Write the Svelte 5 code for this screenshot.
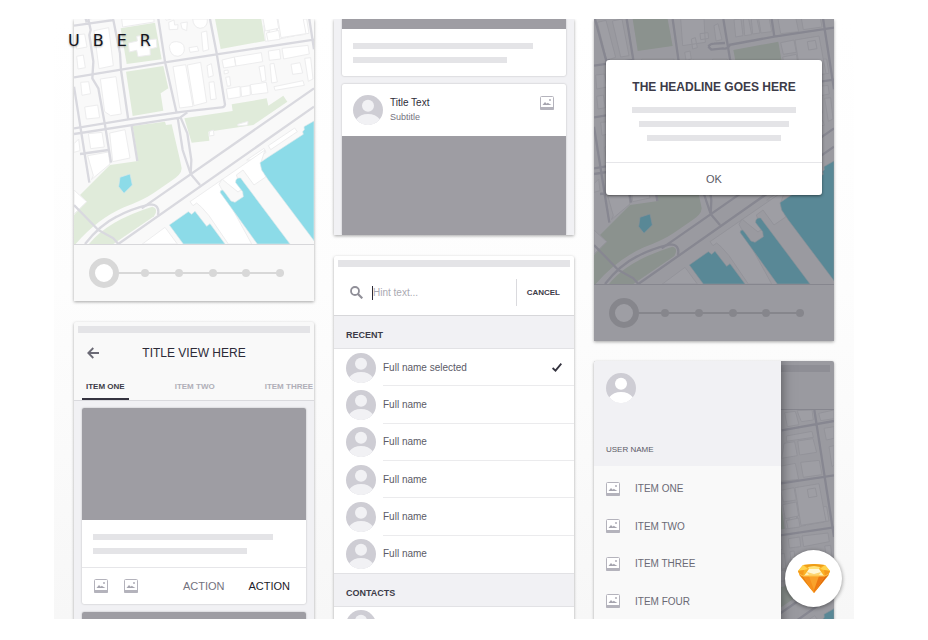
<script lang="ts">
interface Contact {
  id: number
  name: string
}

const tabs = ['ITEM ONE', 'ITEM TWO', 'ITEM THREE']
const menuItems = ['ITEM ONE', 'ITEM TWO', 'ITEM THREE', 'ITEM FOUR']
const recent: Contact[] = [
  { id: 1, name: 'Full name selected' },
  { id: 2, name: 'Full name' },
  { id: 3, name: 'Full name' },
  { id: 4, name: 'Full name' },
  { id: 5, name: 'Full name' },
  { id: 6, name: 'Full name' },
]

let activeTab = $state('ITEM ONE')
let selectedContact = $state(1)
let query = $state('')
</script>

{#snippet cityMap(align: string)}
  <svg class="map" viewBox="0 -290 720 965" preserveAspectRatio={align} aria-hidden="true">
    <rect y="-290" width="720" height="965" fill="#f9f9f9" />
    <g fill="#e0ebda">
      <path d="M116-120H221L236-39 131-24ZM140 28 243 11 263 121 158 135ZM156 158 268 141 283 208 260 223 268 275 176 291ZM418-27 553-52 573 66 440 90Z" />
      <path d="M331 298 476 276 473 256 578 238 583 260 628 230 640 248 538 318 403 338 406 365 353 371Z" />
      <path d="M176 321 273 308 276 318 293 316 318 423 323 448Q323 468 288 488L238 523Q205 545 150 565 70 600 5 675H0V588L38 548 18 528 108 438 192 426Z" />
      <path d="M45 675Q100 605 235 563 255 568 240 592L118 675Z" />
    </g>
    <g fill="#fff" stroke="#ededee" stroke-width="3">
      <path d="M143 0H240V9L146 24ZM163 72 190 66 188 52 208 48V64L247 60 249 85 228 90 229 108 192 113 188 94 166 99Z" />
      <path d="M60 35 104 26 118 140 75 149ZM8 112 28 108 34 146 12 150ZM20 190 44 188 50 224 24 229ZM32 264 71 258 77 296 37 300ZM79 180 126 173 142 285 110 290 92 278Z" />
      <path d="M0 374 14 360 18 395 0 400ZM43 344 84 340 91 384 50 389ZM107 342 153 332 168 417 116 428ZM41 410 103 399 108 435 52 482 58 470ZM0 513 38 548 0 585Z" />
      <path d="M297 143 335 137 357 262 317 267ZM340 138 380 130 398 250 360 260ZM405 190 420 188 427 240 410 242ZM399 140 412 134 418 170 403 175ZM382 40 398 36 404 92 387 97ZM345 86 370 82 374 96 348 100Z" />
      <path d="M286 82Q290 67 308 68 330 70 331 88 332 108 312 112 288 112 286 82ZM284 10 300 3 302 18 312 17 311 31 286 32ZM320 12 340 9 338 35 324 29ZM356 0H400Q402 27 378 28 358 25 356 0Z" />
      <path d="M570 20 580 16 585 65 574 67ZM584 15 604 12 612 60 590 64ZM607 10 630 6 636 56 614 60ZM633 3 655 0 662 51 639 55ZM658 0H676L688 47 665 50ZM680 0H698L705 43 690 45Z" />
      <path d="M444 123 481 114 485 141 449 147ZM481 114 562 101 566 128 486 141ZM583 96 617 91 620 120 586 124ZM624 88 702 79 706 105 629 120ZM692 118 710 116 717 180 703 187ZM555 143 571 140 576 185 563 188ZM588 135 600 133 610 189 593 192ZM651 136 678 131 686 162 656 166Z" />
      <path d="M450 155 462 153 463 162 451 165ZM455 175 467 173 470 200 460 202ZM457 210 498 202 499 234 462 240ZM500 204 528 200 529 228 503 233ZM529 197 577 190 582 221 533 227ZM600 203 687 185 691 199 603 214ZM407 337 418 333 420 349 405 351ZM491 316 522 307 521 318 492 321Z" />
      <path d="M583 380 662 327 670 338 590 392ZM518 423 570 388 576 400 545 423ZM205 675 273 625 310 675Z" />
      <path d="M348 548 573 393 562 427 575 474 540 498 507 453 487 468 504 511 492 519 461 494 444 480 435 496 533 675H463L405 590 383 565 368 552 357 560Z" />
      <!-- blocks north of the park -->
      <path d="M10-110 36-116 65-5 38 4ZM55-114 84-120 105-10 80-6ZM260-120 330-120 334-50 266-40ZM5 48 32 45 39 84 8 90ZM272-20 288-24 292 0 276 4ZM292-60 304-64 310-34 296-30ZM318-76 342-79 344-62 320-58ZM360-100 372-106 384-58 366-54ZM420-118 441-120 447-70 425-66ZM448-120 464-120 473-73 452-70ZM472-120 489-120 498-78 476-75ZM494-120 526-120 533-82 501-78Z" />
      <path d="M552-120 604-130 614-82 560-76ZM620-133 676-139 684-96 628-88ZM560-49 600-57 607-20 568-14ZM566-6 607-14 614 28 574 36ZM603-57 675-69 696 44 621 56ZM640-52 664-56 669-31 644-27ZM577 42 614 34 618 61 582 66ZM563-145 610-153 602-195 570-190ZM617-155 668-163 657-204 611-197Z" />
      <path d="M572-282 604-286 615-246 580-240ZM609-288 654-290 658-260 622-255ZM577-212 654-226 658-208 577-196ZM674-280 720-290V-264L680-258ZM690-235 720-240V-205L697-200ZM705-180 720-183V-125L714-120Z" />
    </g>
    <g fill="#8cdbe8" stroke="#d8e7ea" stroke-width="2">
      <path d="M138 475 168 465 175 498 150 523 134 503Z" />
      <path d="M286 618 343 578 353 586 363 577 398 622 408 614 453 675H328Z" />
      <path d="M439 521Q437 513 446 513L453 521 471 546 483 550 508 533 506 518 485 491Q484 475 500 477L508 488 648 675H550Z" />
      <path d="M558 431 580 416 688 346 686 338 691 332 690 323 720 306V665L583 483 563 453Z" />
    </g>
    <g fill="none" stroke="#d9d9df" stroke-width="7" stroke-linejoin="round">
      <path d="M0 20 118 3M3-120 38 10M98-120 118 3 138 103 141 153 163 303M43 0 50 33 46 48 58 128 55 178 73 208 93 318 111 431" />
      <path d="M236-120 253 0 273 128 308 283M388-120 408 0 428 103 453 257Q452 265 443 265L328 278 163 301 0 328M0 175 273 130 428 106 720 62" />
      <path d="M0 345 318 296 340 280M311 296 326 393 350 465 378 498M320 296 340 343 352 423 350 465M720 208 203 568M720 263 133 675" />
      <path d="M0 203 35 423 46 491M18 405 103 393M173 321 190 426M0 558 73 633 118 658 133 675M33 675Q78 618 128 593 170 570 228 556 258 556 252 588" />
      <path d="M343-37Q348-46 360-46L393-48M408-42Q400-28 387-32L352-28 343-37M404-42 541-67 720-94M533-120 541-67M661-290 720 91M563-229 720-257" />
    </g>
  </svg>
{/snippet}

{#snippet avatar(shape: string)}
  <svg class="avatar" viewBox="0 0 30 30" aria-hidden="true">
    <circle cx="15" cy="15" r="15" fill="#cecdd4" />
    <circle cx="15" cy="10.8" r="6" fill={shape} />
    <path d="M3.2 24.3Q7.5 19 15 19t11.8 5.3A15 15 0 0 1 3.2 24.3Z" fill={shape} />
  </svg>
{/snippet}

{#snippet picture()}
  <svg class="picture" viewBox="0 0 14 14" aria-hidden="true">
    <rect x=".5" y=".5" width="13" height="13" rx="1" fill="#fff" stroke="#b4b3bc" />
    <path d="M0 11H14V13a1 1 0 0 1-1 1H1a1 1 0 0 1-1-1Z" fill="#b4b3bc" />
    <path d="M2.5 9 5 6 6.7 7.8 7.8 6.8 9.2 7.8 11.5 9Z" fill="#a5a4ae" />
    <circle cx="10" cy="4" r="1.1" fill="#b4b3bc" />
  </svg>
{/snippet}

{#snippet stepper(label: string)}
  <div class="stepper">
    <div class="steps">
      {#each [1, 2, 3, 4, 5] as step (step)}
        <span class="dot"></span>
      {/each}
    </div>
    <input type="range" min="0" max="5" value="0" aria-label={label} />
  </div>
{/snippet}

{#snippet textLines()}
  <div class="text-lines">
    <span class="line"></span>
    <span class="line short"></span>
  </div>
{/snippet}

<main class="board">
  <h1 class="brand"><span>U</span><span>B</span><span>E</span><span>R</span></h1>

  <div class="column">
    <section class="screen cut">
      <div class="map-view">{@render cityMap('xMidYMax slice')}</div>
      {@render stepper('Vehicle type')}
    </section>

    <section class="screen">
      <div class="status-bar"></div>
      <header class="title-bar">
        <button class="back" aria-label="Back">
          <svg viewBox="0 0 12 12" fill="none" stroke="#6b6a75" stroke-width="1.8">
            <path d="M12 6H1.5M6.3 1 1.3 6l5 5" />
          </svg>
        </button>
        <h2>TITLE VIEW HERE</h2>
      </header>
      <nav class="tabs">
        {#each tabs as tab (tab)}
          <button class:active={activeTab === tab} onclick={() => (activeTab = tab)}>{tab}</button>
        {/each}
      </nav>
      <div class="feed">
        <article class="card">
          <div class="media tall"></div>
          {@render textLines()}
          <footer class="actions">
            <button aria-label="Image">{@render picture()}</button>
            <button aria-label="Gallery">{@render picture()}</button>
            <button class="action push">ACTION</button>
            <button class="action primary">ACTION</button>
          </footer>
        </article>
        <article class="card">
          <div class="media tall"></div>
        </article>
      </div>
    </section>
  </div>

  <div class="column">
    <section class="screen cut feed cropped">
      <article class="card">
        <div class="media strip"></div>
        {@render textLines()}
      </article>
      <article class="card">
        <header class="card-header">
          {@render avatar('#f1f1f4')}
          <div>
            <h3>Title Text</h3>
            <p>Subtitle</p>
          </div>
          <button aria-label="Image">{@render picture()}</button>
        </header>
        <div class="media"></div>
      </article>
    </section>

    <section class="screen search-screen">
      <div class="status-bar"></div>
      <div class="search">
        <svg class="glass" viewBox="0 0 13 13" fill="none" stroke="#908f98" aria-hidden="true">
          <circle cx="5" cy="5" r="4" stroke-width="1.8" />
          <path d="M8 8l4.3 4.3" stroke-width="2.2" />
        </svg>
        <input type="text" placeholder="Hint text..." aria-label="Search" bind:value={query} />
        <button class="cancel" onclick={() => (query = '')}>CANCEL</button>
      </div>
      <h3 class="group">RECENT</h3>
      <ul class="contacts">
        {#each recent as contact (contact.id)}
          <li>
            <button onclick={() => (selectedContact = contact.id)}>
              {@render avatar('#f1f1f4')}
              <span class="name">
                {contact.name}
                {#if selectedContact === contact.id}
                  <svg class="check" viewBox="0 0 10 9" fill="none" stroke="#34333f" stroke-width="1.8" aria-hidden="true">
                    <path d="M.6 5 3.5 7.6 9.3.7" />
                  </svg>
                {/if}
              </span>
            </button>
          </li>
        {/each}
      </ul>
      <h3 class="group ruled">CONTACTS</h3>
      <div class="next-contact">{@render avatar('#f1f1f4')}</div>
    </section>
  </div>

  <div class="column tight">
    <section class="screen cut">
      <div class="map-view large">{@render cityMap('xMidYMax slice')}</div>
      {@render stepper('Vehicle type, behind dialog')}
      <div class="scrim"></div>
      <div class="dialog" role="dialog" aria-labelledby="headline">
        <div class="dialog-body">
          <h2 id="headline">THE HEADLINE GOES HERE</h2>
          <span class="line"></span>
          <span class="line medium"></span>
          <span class="line short"></span>
        </div>
        <button>OK</button>
      </div>
    </section>

    <section class="screen">
      <div class="status-bar"></div>
      <div class="app-bar"></div>
      <div class="map-view">{@render cityMap('xMidYMin slice')}</div>
      <div class="scrim"></div>
      <aside class="drawer">
        <header>
          {@render avatar('#fff')}
          <p>USER NAME</p>
        </header>
        <nav>
          {#each menuItems as item (item)}
            <a href="#menu">{@render picture()}{item}</a>
          {/each}
        </nav>
      </aside>
    </section>
  </div>

  <button class="badge" aria-label="Download Sketch file">
    <svg viewBox="0 0 32 30" aria-hidden="true">
      <path d="M5 1 16 0 27 1 32 7 30 12 16 29 2 12 0 7Z" fill="#fbb024" />
      <path d="M5 1 16 0 27 1 22 3 16 2 10 3Z" fill="#ee9c16" />
      <path d="M5 1 10 5 6 6 0 7ZM27 1 22 5 26 6 32 7Z" fill="#ffd24d" />
      <path d="M0 7 6 6 5 12H2ZM32 7 26 6 27 12H30Z" fill="#f59a1c" />
      <path d="M10 3 16 2 22 3 21 5H11Z" fill="#ffe27a" />
      <path d="M11 5H21L26 12H6Z" fill="#fdd673" />
      <path d="M11 5H21L23 8 16 10 9 8Z" fill="#fff7d6" />
      <path d="M9 8 11 11 6 12ZM23 8 21 11 26 12Z" fill="#fff0b4" />
      <path d="M1 10 5 12 16 29Z" fill="#ea7d12" />
      <path d="M31 10 27 12 16 29Z" fill="#dd6710" />
      <path d="M5 12H16V29Z" fill="#f6901d" />
      <path d="M27 12H16V29Z" fill="#ee7a13" />
      <path d="M11 12H21L16 26Z" fill="#f9a22c" />
      <path d="M1 10 5 12H27L31 10" fill="none" stroke="#ffc34a" />
    </svg>
  </button>
</main>

<style>
  :global(body) {
    margin: 0;
    background: #fff;
    font-family: "Liberation Sans", Arial, sans-serif;
    font-size: 10px;
    color: #5b5a66;
  }

  h1, h2, h3, p, ul {
    margin: 0;
    padding: 0;
  }

  button {
    padding: 0;
    border: 0;
    background: none;
    color: inherit;
    font: inherit;
    cursor: pointer;
  }

  svg {
    display: block;
    flex: none;
  }

  .board {
    position: relative;
    display: grid;
    grid-template-columns: repeat(3, minmax(0, 1fr));
    gap: 20px;
    box-sizing: border-box;
    height: calc(100vh - 40px);
    margin: 19px 74px 21px 54px;
    padding: 0 20px;
    overflow: hidden;
    background: linear-gradient(#fff, #fdfdfd 45%, #f7f7f7);
  }

  .brand {
    position: absolute;
    z-index: 1;
    top: 12px;
    left: 14px;
    display: flex;
    justify-content: space-between;
    width: 83px;
    color: #15151c;
    font-family: "DejaVu Sans", sans-serif;
    font-size: 16px;
    font-weight: 400;
    line-height: 20px;
    text-shadow: 0 1px 2px rgba(0, 0, 0, 0.3);
  }

  .column {
    display: flex;
    flex-direction: column;
    gap: 21px;
    min-width: 0;
  }

  .tight {
    gap: 20px;
  }

  .screen {
    position: relative;
    flex: none;
    overflow: hidden;
    border-radius: 2px;
    background: #f9f9f9;
    box-shadow: 0 1px 3px rgba(0, 0, 0, 0.35);
  }

  .cut {
    border-radius: 0;
  }

  .map-view {
    height: 225px;
  }

  .map-view.large {
    height: 265px;
  }

  .map {
    width: 100%;
    height: 100%;
  }

  .stepper {
    position: relative;
    display: flex;
    align-items: center;
    height: 56px;
    padding: 0 30px 0 41px;
    border-top: 1px solid #d7d7da;
  }

  .steps {
    display: flex;
    flex: 1;
    justify-content: space-between;
    padding-left: 26px;
    background: linear-gradient(#d8d8d8, #d8d8d8) center / 100% 2px no-repeat;
  }

  .dot {
    width: 8px;
    height: 8px;
    border-radius: 50%;
    background: #d8d8d8;
  }

  .stepper input {
    position: absolute;
    left: 15px;
    width: calc(100% - 34px);
    height: 30px;
    margin: 0;
    appearance: none;
    background: none;
  }

  .stepper input::-webkit-slider-thumb {
    appearance: none;
    box-sizing: border-box;
    width: 30px;
    height: 30px;
    border: 6px solid #d8d8d8;
    border-radius: 50%;
    background: #fff;
  }

  .status-bar {
    height: 7px;
    margin: 4px 4px 0;
    background: #e4e4e7;
  }

  .title-bar {
    display: grid;
    grid-template-columns: 12px 1fr 12px;
    align-items: center;
    height: 40px;
    padding: 0 13px;
    text-align: center;
  }

  .title-bar h2 {
    color: #2c2b38;
    font-size: 12px;
    font-weight: 400;
  }

  .back svg {
    width: 12px;
    height: 12px;
  }

  .tabs {
    display: flex;
    gap: 42px;
    height: 27px;
    padding-left: 8px;
    border-bottom: 1px solid #dadade;
    white-space: nowrap;
  }

  .tabs button {
    padding: 2px 4px 0;
    border-bottom: 2px solid transparent;
    color: #b0afb8;
    font-size: 8px;
    font-weight: 700;
  }

  .tabs .active {
    border-color: #34333f;
    color: #3c3b48;
  }

  .feed {
    display: flex;
    flex-direction: column;
    gap: 8px;
    padding: 7px 8px 0;
    background: #f1f1f4;
  }

  .cropped {
    padding-top: 0;
  }

  .card {
    overflow: hidden;
    border-radius: 2px;
    background: #fff;
    box-shadow: 0 0 2px rgba(0, 0, 0, 0.25);
  }

  .cropped .card:first-child {
    border-radius: 0 0 2px 2px;
  }

  .cropped .card:last-child {
    border-radius: 2px 2px 0 0;
  }

  .media {
    height: 99px;
    background: #9e9da3;
  }

  .media.tall {
    height: 112px;
  }

  .media.strip {
    height: 10px;
  }

  .text-lines {
    display: flex;
    flex-direction: column;
    gap: 8px;
    padding: 14px 11px 13px;
  }

  .line {
    width: 89%;
    height: 6px;
    background: #e4e4e7;
  }

  .text-lines .short {
    width: 76%;
  }

  .actions {
    display: flex;
    align-items: center;
    gap: 16px;
    height: 36px;
    padding: 0 16px 0 12px;
    border-top: 1px solid #e6e6e9;
  }

  .picture {
    width: 14px;
    height: 14px;
  }

  .action {
    color: #73727e;
    font-size: 11px;
  }

  .push {
    margin-left: auto;
  }

  .primary {
    margin-left: 8px;
    color: #1c1b29;
  }

  .card-header {
    display: flex;
    align-items: center;
    gap: 7px;
    height: 52px;
    padding: 0 12px 0 11px;
  }

  .avatar {
    width: 30px;
    height: 30px;
  }

  .card-header div {
    flex: 1;
  }

  .card-header h3 {
    color: #2c2b38;
    font-size: 10px;
    font-weight: 400;
    line-height: 14px;
  }

  .card-header p {
    color: #73727e;
    font-size: 9px;
    line-height: 14px;
  }

  .card-header button {
    align-self: flex-start;
    margin-top: 12px;
  }

  .search-screen {
    background: #fff;
  }

  .search {
    display: flex;
    align-items: center;
    height: 45px;
    padding: 3px 14px 0 16px;
    border-bottom: 1px solid #d7d7da;
  }

  .glass {
    width: 13px;
    height: 13px;
    margin-right: 9px;
  }

  .search input {
    flex: 1;
    min-width: 0;
    height: 14px;
    padding: 0;
    border: 0;
    border-left: 1px solid #2c2b38;
    outline: none;
    background: none;
    font: inherit;
  }

  .search input::placeholder {
    color: #aaa9b2;
  }

  .cancel {
    height: 27px;
    padding-left: 10px;
    border-left: 1px solid #dadade;
    color: #3c3b48;
    font-size: 8px;
    font-weight: 700;
  }

  .group {
    height: 32px;
    padding-left: 12px;
    border-bottom: 1px solid #e2e2e5;
    background: #f1f1f4;
    color: #3c3b48;
    font-size: 9px;
    line-height: 38px;
  }

  .ruled {
    border-top: 1px solid #e2e2e5;
  }

  .contacts {
    display: grid;
    grid-auto-rows: 1fr;
    height: 224px;
    list-style: none;
  }

  .contacts li {
    display: flex;
  }

  .contacts button {
    display: flex;
    flex: 1;
    align-items: center;
    gap: 7px;
    padding-left: 12px;
    text-align: left;
  }

  .name {
    display: flex;
    flex: 1;
    align-self: stretch;
    align-items: center;
    justify-content: space-between;
    padding-right: 12px;
    border-bottom: 1px solid #ebebed;
  }

  .contacts li:last-child .name {
    border-color: transparent;
  }

  .check {
    width: 10px;
    height: 9px;
  }

  .next-contact {
    padding: 3px 12px;
  }

  .scrim {
    position: absolute;
    inset: 0;
    background: rgba(12, 12, 27, 0.4);
  }

  .dialog {
    position: absolute;
    top: 41px;
    right: 12px;
    left: 12px;
    border-radius: 3px;
    background: #fff;
    box-shadow: 0 1px 3px rgba(0, 0, 0, 0.5);
  }

  .dialog-body {
    display: flex;
    flex-direction: column;
    align-items: center;
    gap: 8px;
    padding: 19px 0 21px;
  }

  .dialog h2 {
    margin-bottom: 4px;
    color: #3c3b48;
    font-size: 12px;
    line-height: 16px;
  }

  .dialog .line {
    width: 76%;
  }

  .dialog .medium {
    width: 69%;
  }

  .dialog .short {
    width: 62%;
  }

  .dialog button {
    width: 100%;
    height: 33px;
    border-top: 1px solid #e6e6e9;
    border-radius: 0 0 3px 3px;
    color: #5b5a66;
    font-size: 11px;
  }

  .app-bar {
    height: 37px;
    border-bottom: 1px solid #d7d7da;
  }

  .drawer {
    position: absolute;
    inset: 0 auto 0 0;
    width: 78%;
    background: #f9f9f9;
    box-shadow: 0 0 12px rgba(0, 0, 0, 0.5);
  }

  .drawer header {
    display: flex;
    flex-direction: column;
    justify-content: space-between;
    box-sizing: border-box;
    height: 105px;
    padding: 12px;
    background: #f1f1f4;
    font-size: 8px;
  }

  .drawer nav {
    display: grid;
    grid-auto-rows: 1fr;
    height: 150px;
    padding-top: 4px;
  }

  .drawer a {
    display: flex;
    align-items: center;
    gap: 15px;
    padding-left: 12px;
    color: #6b6a75;
    text-decoration: none;
  }

  .badge {
    position: absolute;
    right: 12px;
    bottom: 12px;
    display: grid;
    place-items: center;
    width: 57px;
    height: 57px;
    border-radius: 50%;
    background: #fff;
    box-shadow: 0 1px 4px rgba(0, 0, 0, 0.45);
  }

  .badge svg {
    width: 32px;
    height: 30px;
  }
</style>
